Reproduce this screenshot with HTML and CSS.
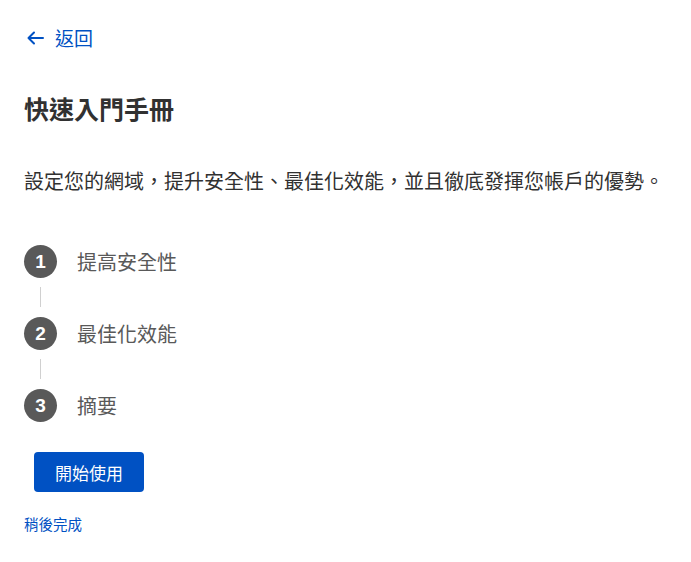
FILE: index.html
```html
<!DOCTYPE html>
<html lang="zh-Hant">
<head>
<meta charset="utf-8">
<link rel="stylesheet" href="styles.css">
</head>
<body>
<main class="page">
  <a class="back" href="#">
    <svg class="back-icon" width="18" height="14" viewBox="0 0 18 14" aria-hidden="true">
      <path d="M8 1.5 L2.5 7 L8 12.5 M2.5 7 H17" fill="none" stroke="#0051c3" stroke-width="2" stroke-linecap="round" stroke-linejoin="round"/>
    </svg>
    <span>返回</span>
  </a>
  <h1 class="title">快速入門手冊</h1>
  <p class="intro">設定您的網域，提升安全性、最佳化效能，並且徹底發揮您帳戶的優勢。</p>
  <ol class="steps">
    <li class="step"><span class="num">1</span><span class="label">提高安全性</span></li>
    <li class="connector"></li>
    <li class="step"><span class="num">2</span><span class="label">最佳化效能</span></li>
    <li class="connector"></li>
    <li class="step"><span class="num">3</span><span class="label">摘要</span></li>
  </ol>
  <button class="start" type="button">開始使用</button>
  <a class="later" href="#">稍後完成</a>
</main>
</body>
</html>
```
FILE: styles.css
```css
html, body {
  margin: 0;
  padding: 0;
  background: #ffffff;
}
body {
  font-family: "Noto Sans CJK TC", "Noto Sans", sans-serif;
  color: #313131;
}
.page {
  padding: 24px 24px 0 24px;
  display: flex;
  flex-direction: column;
  align-items: flex-start;
}
.back {
  display: flex;
  align-items: center;
  gap: 11px;
  color: #0051c3;
  text-decoration: none;
  font-size: 19px;
  line-height: 28px;
  margin-left: 2px;
}
.back-icon {
  display: block;
}
.title {
  margin: 40px 0 0 0;
  font-size: 25px;
  line-height: 32px;
  font-weight: 700;
  color: #313131;
}
.intro {
  margin: 43px 0 0 0;
  font-size: 20px;
  line-height: 28px;
  color: #313131;
}
.steps {
  list-style: none;
  margin: 50px 0 0 0;
  padding: 0;
  display: flex;
  flex-direction: column;
}
.step {
  display: flex;
  align-items: center;
  gap: 20px;
  height: 33px;
}
.num {
  width: 33px;
  height: 33px;
  border-radius: 50%;
  background: #595959;
  color: #ffffff;
  font-family: "Liberation Sans", Arial, sans-serif;
  font-weight: 700;
  font-size: 19px;
  display: flex;
  align-items: center;
  justify-content: center;
}
.label {
  font-size: 20px;
  color: #595959;
}
.connector {
  width: 1px;
  height: 20px;
  background: #d0d0d0;
  margin: 9px 0 10px 16px;
}
.start {
  margin: 30px 0 0 10px;
  width: 110px;
  height: 40px;
  border: none;
  border-radius: 4px;
  background: #0051c3;
  color: #ffffff;
  font-family: "Noto Sans CJK TC", "Noto Sans", sans-serif;
  font-size: 17px;
  padding: 0;
  cursor: pointer;
}
.later {
  margin-top: 22px;
  font-size: 14.5px;
  line-height: 20px;
  color: #0051c3;
  text-decoration: none;
}
```
